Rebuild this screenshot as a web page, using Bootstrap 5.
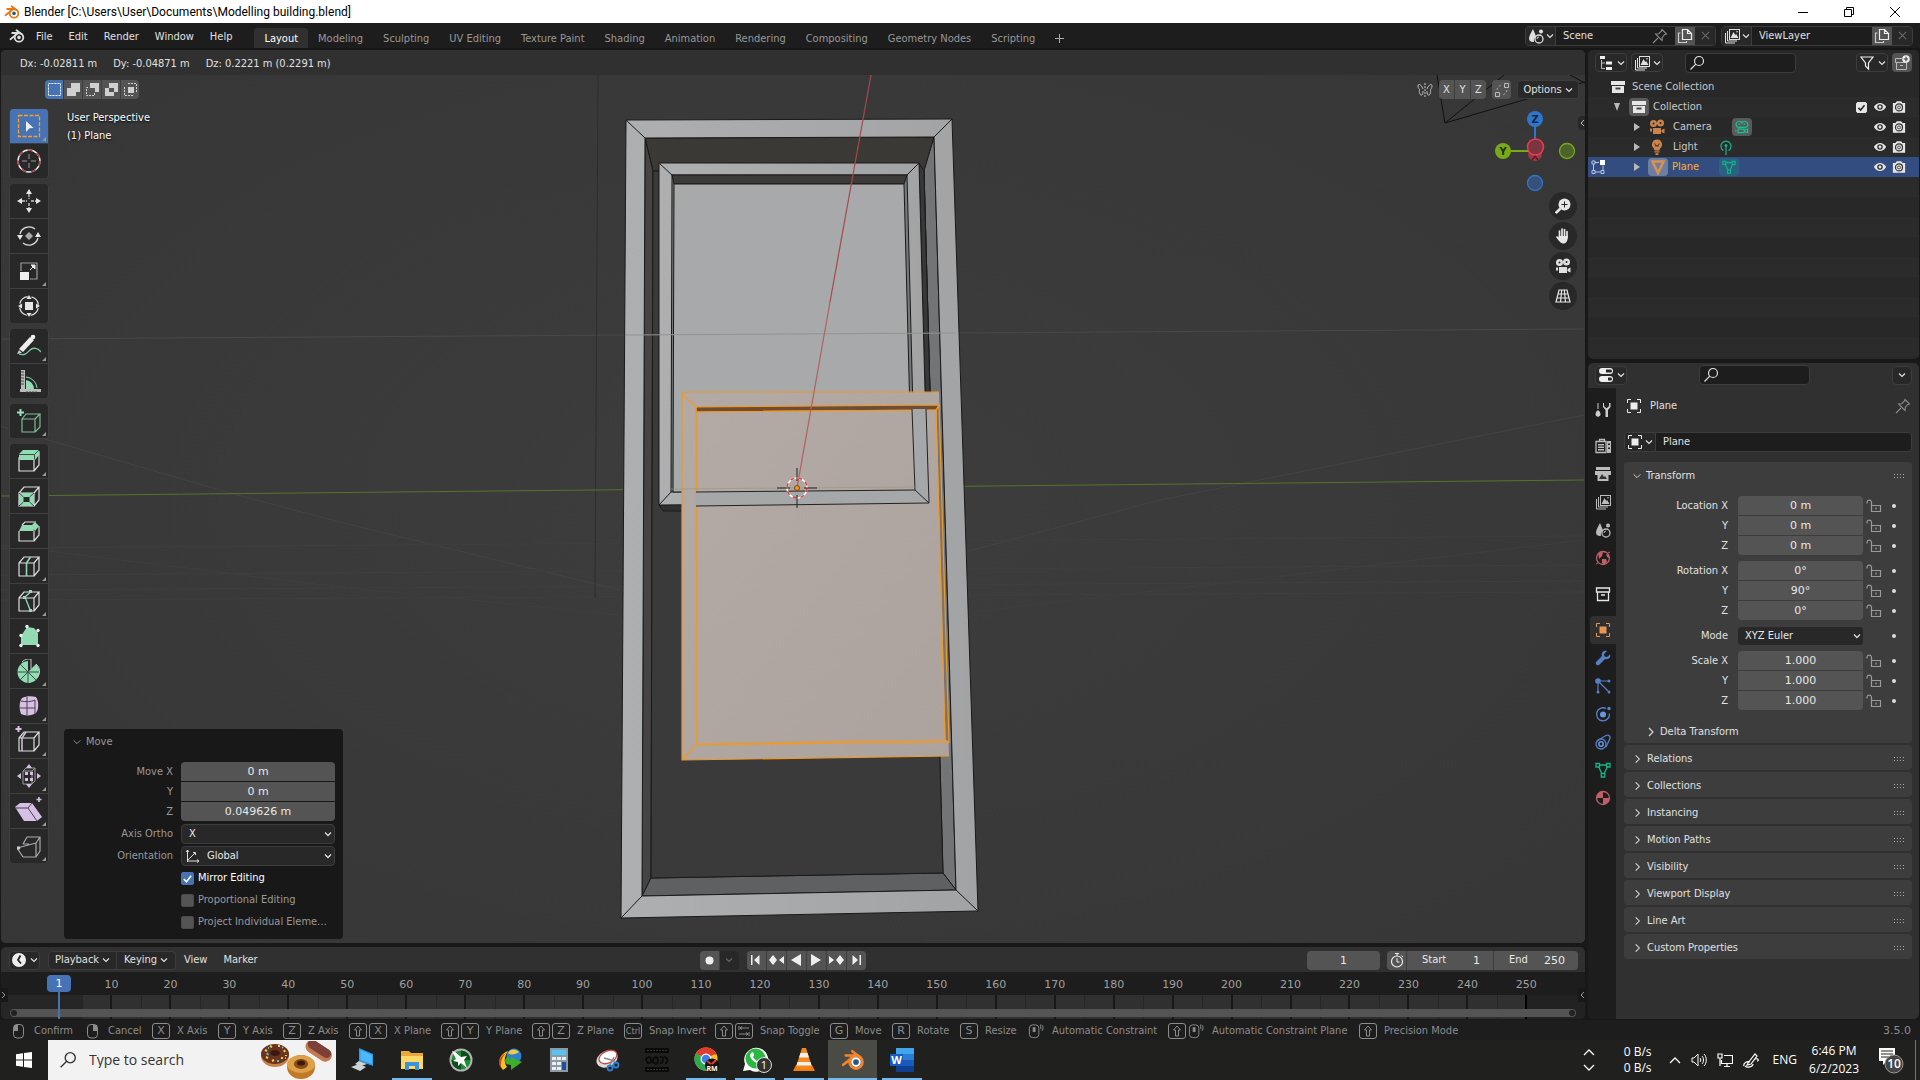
<!DOCTYPE html>
<html lang="en">
<head>
<meta charset="utf-8">
<meta name="viewport" content="width=device-width, initial-scale=1">
<title>Blender [C:\Users\User\Documents\Modelling building.blend]</title>
<link href="https://cdn.jsdelivr.net/npm/bootstrap@5.3.0/dist/css/bootstrap.min.css" rel="stylesheet">
<style>
:root{--ui:"DejaVu Sans Condensed","DejaVu Sans",sans-serif;--num:"DejaVu Sans",sans-serif;--win:"Open Sans","Noto Sans",sans-serif}
body{background:#181818;color:#e0e0e0;font:11px/18px var(--ui);height:100vh;min-height:1000px;overflow:hidden}
svg{display:block;flex:none}
a,a:hover{color:inherit;text-decoration:none}
button,input,select{font:inherit;color:inherit;border:0;padding:0;margin:0;border-radius:0;background:none}
button{display:flex;align-items:center;justify-content:center}
input{min-width:0}
.i16{width:16px;height:16px}.i14{width:14px;height:14px;margin:0 1px}.i24{width:24px;height:24px}
.chev{width:8px;height:8px}
.num-face{font-family:var(--num)}
.c-light{color:#eee}.c-grey{color:#bbb}.c-orange{color:#eb9550}.c-tan{color:#c9834b}
.titlebar{height:23px;background:#fff;color:#000;font:12px/18px Roboto,"Open Sans",sans-serif;padding:0 2px 0 4px}
.logo-tb{color:#e8770c;--eye:#265787}
.logo-app{color:#f5842a;--eye:#fff}
.winbtn{width:46px;height:20px}
.topbar{height:27px;background:#1d1d1d;border-bottom:2px solid #161616;padding:0 7px 0 9px}
.topbar .menus{gap:16px;height:25px;padding:2px 0 0 11px}
.wtabs{margin-left:22px}
.wtab{height:20px;line-height:21px;padding:0 10px;color:#989898;align-self:flex-end;border-radius:3px 3px 0 0}
.wtab.on{background:#303030;color:#fff}
.blocks{gap:5px}
.idblock{height:20px;border:1px solid #3d3d3d;border-radius:4px;background:#1d1d1d;overflow:hidden}
.idblock .pick{width:30px;background:#282828;border-right:1px solid #3d3d3d;gap:2px}
.idblock input{width:88px;padding-left:7px}
.idblock .wide{width:120px}
.idblock .pinb{width:31px}
.idblock .cp{width:20px;background:#545454}
.idblock .rm{width:20px;background:#282828;color:#6a6a6a}
.area{background:#303030;border-radius:5px;overflow:hidden}
.main{padding:0 1px 1px 1px;gap:3px;min-height:0}
.leftcol{gap:4px;min-width:0}
.rightcol{width:331px;gap:4px}
.viewport{background:#393939;min-height:0}
.scene{position:absolute;inset:0;width:100%;height:100%}
.vhead{height:25px;background:#303030;padding-left:19px;line-height:27px;gap:16px}
.vtools{height:34px;padding:5px 6px 0 44px}
.vbody{min-height:0}
.mirror{gap:6px}
.btngrp{border-radius:4px;overflow:hidden;gap:1px;background:#3d3d3d;height:19px}
.btngrp button{width:19px;height:19px;background:#545454}
.btngrp button.on{background:#4772b3}
.selmode button{width:18px}
.xyz button{width:15px}
.btngrp .w20{width:20px}
.btngrp .off{background:#282828;color:#666}
.darkbtn{background:#282828;border:1px solid #3d3d3d;border-radius:4px;height:19px;gap:3px}
.w62{width:62px}.w32{width:32px}.w31{width:31px}.w20{width:20px}.w69{width:69px}.w59{width:59px}
.toolbar{gap:6px;padding-left:8px}
.tgroup{border:1px solid #3f3f3f;border-width:0 1px;border-radius:4px;overflow:hidden;gap:1px;background:#3f3f3f;width:40px}
.tgroup button{width:100%;height:34px;background:#282828;position:relative}
.tgroup button.on{background:#4772b3}
.tgroup .more::after{content:"";position:absolute;right:2px;bottom:2px;border:2px solid transparent;border-right-color:#999;border-bottom-color:#999}
.midcol{margin-left:15px}
.hud{padding:0 0 0 3px;color:#fff;line-height:18px;text-shadow:0 1px 2px #000}
.oppanel{width:279px;background:#181818;border-radius:4px;padding:4px 8px 7px 8px;color:#999}
.oppanel .optitle{margin-bottom:11px}
.nrow{display:flex;align-items:center;height:19px;margin-bottom:1px}
.nrow>label{text-align:right;flex:none}
.oppanel .nrow>label{width:101px;margin-right:8px}
.oppanel .srow{height:22px;margin:0;padding-top:2px}
.oriicon{position:absolute;left:113px}
.numf{font-family:var(--num);background:#545454;color:#e8e8e8;text-align:center;height:19px;flex:1}
.tp{border-radius:4px 4px 0 0}.bt{border-radius:0 0 4px 4px}
.sel{appearance:none;height:20px;flex:1;min-width:0;background:#282828 url("data:image/svg+xml,%3Csvg xmlns='http://www.w3.org/2000/svg' viewBox='0 0 8 8'%3E%3Cpath d='M1 2.5 4 5.5 7 2.5' fill='none' stroke='%23ddd' stroke-width='1.3'/%3E%3C/svg%3E") no-repeat right 2px center/8px 8px;border:1px solid #3d3d3d;border-radius:4px;color:#e8e8e8;padding-left:7px}
.sel.with-ico{padding-left:25px}
.ck{appearance:none;width:13px;height:13px;background:#545454;border:1px solid #4a4a4a;border-radius:2px;margin-right:4px}
.ck:checked{background:#4772b3 url("data:image/svg+xml,%3Csvg xmlns='http://www.w3.org/2000/svg' viewBox='0 0 12 12'%3E%3Cpath d='M2 6.5 4.8 9.5 10 3' fill='none' stroke='%23fff' stroke-width='1.7'/%3E%3C/svg%3E") center/11px no-repeat;border-color:#4772b3}
.ck.inv:checked{width:11px;height:11px;margin-right:5px;background:#e6e6e6 url("data:image/svg+xml,%3Csvg xmlns='http://www.w3.org/2000/svg' viewBox='0 0 12 12'%3E%3Cpath d='M2 6.5 4.8 9.5 10 3' fill='none' stroke='%23222' stroke-width='2'/%3E%3C/svg%3E") center/9px no-repeat;border-color:#e6e6e6}
.ckrow{height:22px;padding:2px 0 0 109px}
.navb{width:28px;height:28px;border-radius:50%;background:#282828;margin-bottom:2px}
.gizcol{width:110px}
.ntab{position:absolute;right:0;top:66px;width:7px;height:14px;background:#282828;border-radius:4px 0 0 4px}
.timeline{height:72px}
.thead{height:25px;padding:1px 7px 0 8px}
.tmenu{gap:16px;margin-left:8px}
.transport{margin-right:22px}
.frames{flex:1 1 0;min-width:0}
.frames .numf{flex:none}
.curframe{width:73px;border-radius:4px;margin-right:7px}
.frames label.numf{text-align:left;font-family:var(--ui);padding-left:15px}
.fstart-l{width:52px}.fstart{width:34px;margin-left:-1px;text-align:right;padding-right:13px}
.fend-l{width:42px}.fend{width:42px;margin-left:-1px;text-align:right;padding-right:13px}
.ruler{height:23px;background:#1d1d1d;padding:0 29px 0 81px;font-family:var(--num);color:#a0a0a0}
.ruler span{flex:1 1 0;text-align:center;line-height:25px}
.ticks{height:24px;padding:0 0 0 81px;background:#262626}
.ticks i{flex:1 1 0;background:linear-gradient(#181818,#181818) 50% 0/2px 100% no-repeat,linear-gradient(#262626,#262626) 0 0/1px 100% no-repeat,#303030}
.ticks i:last-of-type{background:linear-gradient(#000,#000) 50% 0/2px 100% no-repeat,linear-gradient(#262626,#262626) 0 0/1px 100% no-repeat,linear-gradient(90deg,#303030 50%,#222 50%)}
.ticks b{width:29px;background:#222}
.sbar{position:absolute;left:9px;right:9px;bottom:2px;height:8px;border-radius:4px;background:#545454}
.sbar::before,.sbar::after{content:"";position:absolute;top:1px;width:6px;height:6px;border-radius:3px;background:#222}
.sbar::before{left:1px}.sbar::after{right:1px}
.playhead{position:absolute;left:46px;top:28px;width:24px;height:17px;border-radius:4px;background:#4772b3;color:#fff;text-align:center;font:11px/18px var(--num)}
.playhead::after{content:"";position:absolute;left:11px;top:17px;width:2px;height:27px;background:#4772b3}
.edge{position:absolute;top:41px;width:7px;height:14px;background:#181818}
.edge-l{left:0}.edge-r{right:0}
.statusbar{height:20px;background:#1d1d1d;color:#8c8c8c;padding:1px 9px 0 12px}
.hints{display:grid;grid-template-columns:74px 66px 66px 65px 66px 92px 91px 92px 91px 115px 62px 68px 68px 140px 191px 120px}
.hint{gap:7px;white-space:nowrap}
.keys{gap:2px}
kbd.keycap{display:block;width:18px;height:16px;border:1px solid #8c8c8c;border-radius:3px;background:none;padding:0;color:#8c8c8c;font:11px/14px var(--num);text-align:center}
kbd.tiny{font:9px/14px var(--ui)}
.outliner{height:309px;background:#282828}
.ohead{height:27px;padding:2px 7px 4px 7px;background:#282828}
.osearch{margin-left:22px}
.psearch{margin-left:72px}
.searchf{height:20px;width:111px;background:#1d1d1d;border:1px solid #3d3d3d;border-radius:4px;padding-left:3px}
.orow{height:20px;padding-right:12px;color:#c8c8c8}
.orow:nth-child(even){background:#2b2b2b}
.orow.sel-row{background:#334d80}
.lv0{padding-left:22px}.lv0 .i16{margin-right:6px}
.lv1{padding-left:25px}.lv2{padding-left:45px}.lv-edit{padding-left:2px}
.lv-edit .arrow{margin:0 7px 0 27px}
.data-ico{margin-left:20px}
.icobox{width:20px;height:18px;border-radius:4px;background:#5a5a5a;display:flex;align-items:center;justify-content:center}
.icobox.obj{background:#6d7fa0}.icobox.dat{background:#2a6080}
.c-active{color:#ffaf29}
.arrow{width:8px;height:8px;color:#b8b8b8}
.props{min-height:0}
.phead{height:25px;padding:0 7px 1px 7px}
.ptabs{width:28px;background:#1d1d1d;padding:8px 0 0 2px}
.ptabs button{width:26px;height:28px;border-radius:4px 0 0 4px}
.ptabs .gapb{margin-bottom:8px}
.ptabs .on{background:#303030}
.pbody{padding:8px 7px 0 8px;min-width:0}
.crumb{height:20px;margin-bottom:16px;padding:0 1px 0 2px}
.pname{margin-bottom:10px}
.pname .pick{width:31px}
.pcard{background:#3d3d3d;border-radius:4px;margin-bottom:2px}
.pcard.open{height:281px}
.pcard>.ph{height:25px;padding:2px 7px 0 8px;width:100%}
.pcard .nrow>label{width:104px;margin-right:10px}
.pcard .sel{height:18px;border:0;border-radius:3px}
.pfields{padding-top:9px}
.grp{margin-top:6px}
.lock{width:16px;height:16px;margin:0 10px 0 3px}
.dot{width:4px;height:4px;border-radius:50%;background:#ddd;margin-right:16px;flex:none}
.sel+.dot{margin-left:29px}
.delta{margin:13px 0 0 21px;gap:3px}
.taskbar{height:40px;background:#20201e;color:#fff;font:12px/16px var(--win)}
.startb{width:48px}
.tsearch{width:288px;background:#f2f2f2;padding-left:11px;color:#333}
.tsearch input{width:181px;padding-left:12px;font-size:14px;color:#333}
.tsearch input::placeholder{color:#333;opacity:1}
.tapps{margin-left:2px}
.tapp{width:49px;height:40px;position:relative}
.tapp.run::after{content:"";position:absolute;left:5px;right:4px;bottom:0;height:2px;background:#76b9ed}
.tapp.cur{background:#4b4b46}.tapp.cur::after{left:0;right:0}
.tray{white-space:nowrap;gap:10px}
.netrate{margin:0 7px 0 19px}
.clock{line-height:18px;padding:0 6px 0 2px}
.deskline{width:5px}
</style>
<script src="https://cdn.jsdelivr.net/npm/bootstrap@5.3.0/dist/js/bootstrap.bundle.min.js"></script>
</head>
<body class="d-flex flex-column">
<svg width="0" height="0" class="position-absolute" aria-hidden="true">
<defs>
<symbol id="chev" viewBox="0 0 8 8"><path d="M1 2.500 4 5.500 7 2.500" fill="none" stroke="currentColor" stroke-width="1.200"/></symbol>
<symbol id="cright" viewBox="0 0 12 12"><path d="M4 2l4 4-4 4" fill="none" stroke="currentColor" stroke-width="1.100"/></symbol>
<symbol id="cdown" viewBox="0 0 12 12"><path d="M2 4l4 4 4-4" fill="none" stroke="currentColor" stroke-width="1.100"/></symbol>
<symbol id="blender" viewBox="0 0 16 16"><g fill="none" stroke="currentColor" stroke-width="1.800" stroke-linecap="round"><path d="M1.500 11.200 9.300 5H3.200M7.500 2.200l5.200 4"/><circle cx="10" cy="9.400" r="4.300"/></g><circle cx="10" cy="9.400" r="1.800" fill="var(--eye,currentColor)"/></symbol>
<symbol id="scene" viewBox="0 0 16 16"><path d="M5 1C3 5 1 8 1 10.500 1 13 3 14 5 14c1 0 1-.5 1-.5A5 5 0 0 1 8 8.500C7.500 6 6 4 5 1z" fill="currentColor"/><circle cx="13" cy="3.500" r="2" fill="currentColor"/><circle cx="11" cy="11" r="4" fill="none" stroke="currentColor" stroke-width="1.300"/><path d="M9 11a2 2 0 0 1 2-2" fill="none" stroke="currentColor"/></symbol>
<symbol id="layers" viewBox="0 0 16 16"><path d="M1.500 5v10H11M3.500 3v10H13" fill="none" stroke="currentColor"/><rect x="5.500" y="1.500" width="10" height="10" fill="none" stroke="currentColor"/><path d="M6.500 10 9.500 4l1.800 3 .9-1 2.300 4z" fill="currentColor"/><circle cx="13" cy="3.800" r=".8" fill="currentColor"/></symbol>
<symbol id="copy" viewBox="0 0 16 16"><path d="M5.500 1.500h5l4 4v6h-9zM10.500 1.500v4h4" fill="none" stroke="#eee" stroke-width="1.200"/><path d="M3.500 5H1.500v9.500h8V13" fill="none" stroke="#ccc" stroke-width="1.200"/></symbol>
<symbol id="xx" viewBox="0 0 12 12"><path d="M2 2l8 8M10 2l-8 8" stroke="currentColor" stroke-width="1.100"/></symbol>
<symbol id="pin" viewBox="0 0 16 16"><path d="M10 1.500 14.500 6l-1.700.5-2.500 2.700-.3 3.300L3.500 6l3.300-.3L9.500 3zM6 10l-5 5" fill="none" stroke="#8a8a8a" stroke-width="1.100"/></symbol>
<symbol id="search" viewBox="0 0 16 16"><circle cx="10" cy="6" r="4.500" fill="none" stroke="currentColor" stroke-width="1.200"/><path d="M6.800 9.200 1.500 14.500" stroke="currentColor" stroke-width="1.200"/></symbol>
<symbol id="tree" viewBox="0 0 16 16"><path d="M2 1h5v3H2zM8 6.500h6v3H8zM8 12h6v3H8z" fill="#eee"/><path d="M3.500 5v8.500H7M3.500 8H7" fill="none" stroke="#bbb"/></symbol>
<symbol id="filter" viewBox="0 0 16 16"><path d="M2 2h12L9.500 8v6L6.500 11V8z" fill="none" stroke="#eee" stroke-width="1.200"/></symbol>
<symbol id="newcol" viewBox="0 0 16 16"><path d="M8 3.500H1.500v4h11M2.500 7.500v7h10v-7M6 10.500h3" fill="none" stroke="#bbb"/><circle cx="12" cy="4" r="3.800" fill="#eee"/><path d="M12 1.800v4.400M9.800 4h4.400" stroke="#444" stroke-width="1.200"/></symbol>
<symbol id="box" viewBox="0 0 16 16"><path d="M1 2h14v4H1zM2 7h12v7H2z" fill="#e6e6e6"/><path d="M5.500 8.500h5v2h-5z" fill="#444"/></symbol>
<symbol id="boxo" viewBox="0 0 16 16"><path d="M1.500 2h13v4h-13zM2.500 6v8.500h11V6M6 9h4" fill="none" stroke="#e6e6e6" stroke-width="1.300"/></symbol>
<symbol id="cam" viewBox="0 0 16 16"><circle cx="4.500" cy="4.500" r="3.500" fill="currentColor"/><circle cx="11.500" cy="4" r="3.500" fill="currentColor"/><circle cx="4.500" cy="4.500" r="1" fill="#282828"/><circle cx="11.500" cy="4" r="1" fill="#282828"/><path d="M4 9h8v6H4zM12.500 11 15.500 9.500v5L12.500 13zM1 9.500h2v3H1z" fill="currentColor"/></symbol>
<symbol id="camo" viewBox="0 0 16 16"><g fill="none" stroke="#12c496" stroke-width="1.300"><path d="M5 8.500A3.500 3.500 0 1 1 8 3.700 3.500 3.500 0 1 1 11 8.500zM3.500 10.500h7v4h-7zM10.500 11.800l4-1.500v4l-4-1.300M1 11v2"/></g><circle cx="4.800" cy="5" r=".9" fill="#12c496"/><circle cx="11" cy="4.500" r=".9" fill="#12c496"/></symbol>
<symbol id="bulb" viewBox="0 0 16 16"><path d="M8 .5a5 5 0 0 1 3 9l-.5 2h-5l-.5-2a5 5 0 0 1 3-9zM5.500 12.300h5v1.300h-5zM6.500 14.300h3V16h-3z" fill="#c9834b"/><path d="M6 4.500l1 3 1-1.500L9 7.500l1-3" fill="none" stroke="#4b3526"/></symbol>
<symbol id="lighto" viewBox="0 0 16 16"><path d="M5.500 11.500a5 5 0 1 1 5 0M8 8v8" fill="none" stroke="#12b389" stroke-width="1.200"/><circle cx="8" cy="6.500" r="1.500" fill="#12b389"/></symbol>
<symbol id="tri" viewBox="0 0 16 16"><path d="M2.500 2.500h11L8 14z" fill="none" stroke="#dd9050" stroke-width="2.500"/></symbol>
<symbol id="mesh" viewBox="0 0 16 16"><g fill="none" stroke="#12b389" stroke-width="1.300"><path d="M4.500 3h7M3.500 4.500 7 12M12.500 4.500 9 12"/><path d="M1 1.500h3.500V5H1zM11.500 1.500H15V5h-3.500zM6.300 11.500h3.500V15H6.300z"/></g></symbol>
<symbol id="eye" viewBox="0 0 16 16"><path d="M1 8c3.500-6 10.500-6 14 0-3.500 6-10.500 6-14 0z" fill="#e6e6e6"/><circle cx="8" cy="8" r="3.200" fill="#333"/><circle cx="8" cy="8" r="1.600" fill="#e6e6e6"/></symbol>
<symbol id="photo" viewBox="0 0 16 16"><path d="M1 3.500h3L5.500 1.500h5L12 3.500h3v11H1z" fill="#e6e6e6"/><circle cx="8" cy="8.500" r="4" fill="#e6e6e6" stroke="#333" stroke-width="1.400"/><circle cx="8" cy="8.500" r="1.700" fill="none" stroke="#333"/></symbol>
<symbol id="editm" viewBox="0 0 16 16"><path d="M3.500 5v6M5 13h6M13 6.500V11M5 3.500h4" stroke="#b8c4da" fill="none"/><path d="M2 2h3v3H2zM2 11.500h3v3H2zM11 11.500h3v3h-3z" fill="none" stroke="#b8c4da"/><path d="M10 1h5v5h-5z" fill="#fff"/></symbol>
<symbol id="objsq" viewBox="0 0 16 16"><path d="M1.500 5V1.500H5M11 1.500h3.500V5M14.500 11v3.500H11M5 14.500H1.500V11" fill="none" stroke="currentColor"/><path d="M4.500 4.500h7v7h-7z" fill="currentColor"/></symbol>
<symbol id="grip" viewBox="0 0 12 6"><g fill="#aaa"><path d="M1 1h1v1H1zM4 1h1v1H4zM7 1h1v1H7zM10 1h1v1h-1zM1 4h1v1H1zM4 4h1v1H4zM7 4h1v1H7zM10 4h1v1h-1z"/></g></symbol>
<symbol id="lock" viewBox="0 0 16 16"><path d="M5.500 7.500V4a2.300 2.300 0 0 0-4.500 0v1.500M5.500 7.500h9v6h-9zM10 9.500v2" fill="none" stroke="#9a9a9a" stroke-width="1.200"/></symbol>
<symbol id="shift" viewBox="0 0 12 12"><path d="M6 1l3.500 4H7.500v6h-3V5h-2z" fill="none" stroke="#8c8c8c" stroke-width="1"/></symbol>
<symbol id="cube" viewBox="0 0 24 24"><path d="M2 9h15v13H2zM2 9l5-6h15l-5 6M22 3v13l-5 6" fill="none" stroke="#ddd" stroke-width="1.200"/></symbol>
<symbol id="wheel" viewBox="0 0 18 16"><rect x="1.500" y="1.500" width="10" height="13.500" rx="3.500" fill="none" stroke="#8c8c8c"/><rect x="5" y="4" width="3" height="5" fill="#8c8c8c"/><path d="M13.500 1v5M15.500 2c.8 3 .3 5-1 6" fill="none" stroke="#8c8c8c"/></symbol>
</defs></svg>

<header class="titlebar d-flex align-items-center">
<svg class="i16 me-1 logo-tb"><use href="#blender"/></svg>
<span>Blender [C:\Users\User\Documents\Modelling building.blend]</span>
<div class="ms-auto d-flex">
<button class="winbtn" aria-label="Minimize"><svg width="10" height="10"><path d="M0 5.500h10" stroke="#000"/></svg></button>
<button class="winbtn" aria-label="Restore"><svg width="10" height="10"><path d="M.5 2.500h7v7h-7zM2.500 2.500v-2h7v7h-2" fill="none" stroke="#000"/></svg></button>
<button class="winbtn" aria-label="Close"><svg width="10" height="10"><path d="M0 0l10 10M10 0 0 10" stroke="#000"/></svg></button>
</div>
</header>

<nav class="topbar d-flex align-items-center">
<svg class="i16"><use href="#blender"/></svg>
<div class="menus d-flex align-items-center"><a href="#">File</a><a href="#">Edit</a><a href="#">Render</a><a href="#">Window</a><a href="#">Help</a></div>
<div class="wtabs d-flex align-self-stretch">
<a href="#" class="wtab on">Layout</a><a href="#" class="wtab">Modeling</a><a href="#" class="wtab">Sculpting</a><a href="#" class="wtab">UV Editing</a><a href="#" class="wtab">Texture Paint</a><a href="#" class="wtab">Shading</a><a href="#" class="wtab">Animation</a><a href="#" class="wtab">Rendering</a><a href="#" class="wtab">Compositing</a><a href="#" class="wtab">Geometry Nodes</a><a href="#" class="wtab">Scripting</a>
<button class="wtab" aria-label="Add workspace"><svg width="9" height="9"><path d="M4.500 0v9M0 4.500h9" stroke="#aaa"/></svg></button>
</div>
<div class="blocks ms-auto d-flex">
<div class="idblock d-flex"><button class="pick" aria-label="Browse scene"><svg class="i16"><use href="#scene"/></svg><svg class="chev"><use href="#chev"/></svg></button><input value="Scene" aria-label="Scene name"><button class="pinb" aria-label="Pin"><svg class="i16"><use href="#pin"/></svg></button><button class="cp" aria-label="New scene"><svg class="i16"><use href="#copy"/></svg></button><button class="rm" aria-label="Delete scene"><svg width="11" height="11"><use href="#xx"/></svg></button></div>
<div class="idblock d-flex"><button class="pick" aria-label="Browse layer"><svg class="i16"><use href="#layers"/></svg><svg class="chev"><use href="#chev"/></svg></button><input class="wide" value="ViewLayer" aria-label="Layer name"><button class="cp" aria-label="New layer"><svg class="i16"><use href="#copy"/></svg></button><button class="rm" aria-label="Delete layer"><svg width="11" height="11"><use href="#xx"/></svg></button></div>
</div>
</nav>

<main class="main d-flex flex-grow-1">
<div class="leftcol d-flex flex-column flex-grow-1">
<section class="viewport area flex-grow-1 position-relative d-flex flex-column">
<svg class="scene" viewBox="1 50 1584 893" preserveAspectRatio="xMidYMid slice" aria-label="3D scene">
<defs><linearGradient id="fr" x1="0" x2="1"><stop offset="0" stop-color="#adafb0"/><stop offset="1" stop-color="#a1a3a4"/></linearGradient>
<linearGradient id="sl" x1="0" x2="1" y2="1"><stop offset="0" stop-color="#b3a9a5"/><stop offset="1" stop-color="#aca29e"/></linearGradient>
<radialGradient id="vbg" r=".75"><stop offset="0" stop-color="#3d3d3d"/><stop offset="1" stop-color="#363636"/></radialGradient></defs>
<rect x="0" y="50" width="1600" height="900" fill="url(#vbg)"/>
<g stroke="#494949" fill="none"><path d="M0 339 1584 329"/><path d="M0 426 230 493 340 522 620 590M1584 415 1160 500 965 552" stroke="#434343"/><path d="M0 548 1584 536M0 575 1584 565M0 590 1584 581M0 600 1584 592M0 545 340 587 620 615M1584 540 1250 580 970 612" stroke="#3f3f3f"/><path d="M598 75 595 598" stroke="#2e2e2e"/></g>
<path d="M0 496 1584 480" stroke="#55742c"/>
<path d="M1445 123 1437 75M1445 123 1504 75M1445 123 1585 82M1570 75 1585 83" stroke="#111" fill="none"/>
<g stroke="#1a1a1a" stroke-linejoin="round">
<path d="M645 138 934 137 924 171 653 171z" fill="#3a3935"/>
<path d="M645 138 653 171 651 878 642 896z" fill="#454344"/>
<path d="M934 137 924 171 943 873 956 890z" fill="#727475"/>
<path d="M642 896 651 878 943 873 956 890z" fill="#5f6062"/>
<path d="M653 171 924 171 943 873 651 878z" fill="#3a3a3a"/>
<path fill-rule="evenodd" d="M626 120 952 119 978 911 621 918zM645 138 642 896 956 890 934 137z" fill="url(#fr)"/>
<path d="M626 120 645 138M952 119 934 137M621 918 642 896M978 911 956 890" fill="none"/>
<path d="M919 163 924 171 930 392 925 392z" fill="#383838"/>
<path d="M659 505 663 511H690L690 500z" fill="#303030"/>
<path d="M659 163 919 163 928 503 659 505z" fill="url(#fr)"/>
<path d="M672 175 907 175 915 490 671 492z" fill="#777a7a"/>
<path d="M672 175H907L904 184H674z" fill="#3d3b38"/>
<path d="M674 184 904 184 912 490 673 492z" fill="#a7a9aa"/>
<path d="M659 163 672 175M919 163 907 175M659 505 671 492M928 503 915 490" fill="none"/>
</g>
<path d="M625 335 955 333" stroke="#929494"/>
<g stroke="#f09a28" stroke-width="1.200">
<path d="M682 394 939 392 949 756 682 760z" fill="url(#sl)" stroke="none"/>
<path d="M939 405 949 742 945 740 936 410z" fill="#74767a"/>
<path d="M696 407 939 405 936 410 696 412z" fill="#6d4d35"/>
<path d="M697 412 936 410 945 740 697 744z" fill="url(#sl)"/>
<path d="M939 392H682V760L949 756M682 394 696 407V745L949 742M682 760 696 745" fill="none"/>
</g>
<path d="M912 409H926L929 503 696 506V492L915 490z" fill="#a5a7a8"/>
<path d="M912 409 915 490 696 492M926 409 929 503 696 506M915 490 929 503" fill="none" stroke="#222"/>
<path d="M871 75 830 302" stroke="#a8484f" stroke-width="1.200"/><path d="M830 302 797 488" stroke="#b0605f" stroke-width="1.200"/>
<path d="M671 489 915 487" stroke="#8f9c7a" opacity=".6"/>
<circle cx="797" cy="488" r="10" fill="none" stroke="#fff" stroke-width="1.500"/><circle cx="797" cy="488" r="10" fill="none" stroke="#e33c3c" stroke-width="1.500" stroke-dasharray="4 4"/>
<path d="M797 468v13M797 495v13M777 488h13M804 488h13" stroke="#222"/><circle cx="797" cy="488" r="2.500" fill="#f5951e" stroke="#7a4a10"/>
</svg>
<div class="vhead position-relative d-flex"><span>Dx: -0.02811 m</span><span>Dy: -0.04871 m</span><span>Dz: 0.2221 m (0.2291 m)</span></div>
<div class="vtools position-relative d-flex align-items-start">
<div class="btngrp selmode d-flex">
<button class="on" aria-label="Set"><svg width="15" height="15"><path d="M1.500 1.500h12v12h-12z" fill="none" stroke="#fff" stroke-dasharray="2 1"/></svg></button>
<button aria-label="Extend"><svg width="15" height="15"><path d="M5 1h9v9h-4v4H1V6h4z" fill="#d0d0d0"/></svg></button>
<button aria-label="Subtract"><svg width="15" height="15"><path d="M5 1h9v9h-4V6H5z" fill="#d0d0d0"/><path d="M9.500 11v2.500h-8v-8H4" fill="none" stroke="#d0d0d0" stroke-dasharray="2 1"/></svg></button>
<button aria-label="Difference"><svg width="15" height="15"><path d="M5 1h9v9h-4v4H1V6h4zM5 6v4h5V6z" fill="#d0d0d0" fill-rule="evenodd"/></svg></button>
<button aria-label="Intersect"><svg width="15" height="15"><path d="M5 5h6v6H5z" fill="#d0d0d0"/><path d="M5 1.500h8.500V10M10 13.500H1.500V5" fill="none" stroke="#d0d0d0" stroke-dasharray="2 1"/></svg></button>
</div>
<div class="mirror ms-auto d-flex align-items-center">
<svg class="i16"><path d="M6 7C4 2 1 1 1 4c0 2 1 3 2 4-1 0-1 2 0 4s3 2 3-3M10 7c2-5 5-6 5-3 0 2-1 3-2 4 1 0 1 2 0 4s-3 2-3-3" fill="none" stroke="#bbb"/><path d="M8 1v14" stroke="#ccc" stroke-dasharray="2 1"/></svg>
<div class="btngrp xyz d-flex"><button>X</button><button>Y</button><button>Z</button></div>
<div class="btngrp"><button aria-label="Auto merge"><svg class="i16"><path d="M1.500 10.500h4v4h-4zM10.500 1.500h4v4h-4z" fill="none" stroke="#bbb"/><path d="M3 8a6 6 0 0 1 5-5M13 8a6 6 0 0 1-5 5" fill="none" stroke="#aaa" stroke-dasharray="2 2"/></svg></button></div>
<button class="darkbtn px-1 w62">Options <svg class="chev"><use href="#chev"/></svg></button>
</div>
</div>
<div class="vbody d-flex flex-grow-1 position-relative">
<div class="toolbar d-flex flex-column">
<div class="tgroup d-flex flex-column">
<button class="on more" aria-label="Select box"><svg class="i24"><path d="M1.500 1.500h21v21h-21z" fill="none" stroke="#f5a02a" stroke-width="1.300" stroke-dasharray="4 1.500"/><path d="M9 7l7.500 7-4 .3L9 18z" fill="#eee"/></svg></button>
<button aria-label="Cursor"><svg class="i24"><circle cx="12" cy="12" r="11" fill="none" stroke="#eee" stroke-width="1.400"/><circle cx="12" cy="12" r="11" fill="none" stroke="#a8434a" stroke-width="1.600" stroke-dasharray="5 5"/><path d="M12 5v5M12 14v5M5 12h5M14 12h5" stroke="#999"/></svg></button>
</div>
<div class="tgroup d-flex flex-column">
<button aria-label="Move"><svg class="i24"><path d="M12 0l3 5H9zM12 24l3-5H9zM0 12l5-3v6zM24 12l-5-3v6z" fill="#e6e6e6"/><path d="M12 5v5M12 14v5M5 12h5M14 12h5" stroke="#ccc" stroke-width="1.300" stroke-dasharray="3 1"/></svg></button>
<button aria-label="Rotate"><svg class="i24"><path d="M3 10a9.500 9.500 0 0 1 15-5M21 14a9.500 9.500 0 0 1-15 5" fill="none" stroke="#ddd" stroke-width="1.300"/><path d="M0 11h6l-3 5zM18 13h6l-3-5z" fill="#e6e6e6"/><path d="M12 8l4 4-4 4-4-4z" fill="#aaa"/></svg></button>
<button class="more" aria-label="Scale"><svg class="i24"><path d="M4 12V4h16v16h-7" fill="none" stroke="#999" stroke-width="1.200"/><path d="M3 13h9v8H3z" fill="#eee"/><path d="M13 11l4-4M14 6h4v4z" stroke="#eee" fill="#eee"/></svg></button>
<button aria-label="Transform"><svg class="i24"><circle cx="12" cy="12" r="9.500" fill="none" stroke="#ddd" stroke-width="1.200" stroke-dasharray="11 4" stroke-dashoffset="-2"/><path d="M8 8h8v8H8zM12 1l2.500 4h-5zM12 23l2.500-4h-5zM1 12l4-2.500v5zM23 12l-4-2.500v5z" fill="#e6e6e6"/></svg></button>
</div>
<div class="tgroup d-flex flex-column">
<button class="more" aria-label="Annotate"><svg class="i24"><path d="M2 15 13 3l4 3L6 18z" fill="#eee"/><circle cx="16" cy="3" r="2.300" fill="#eee"/><path d="M2 16l3 3-5 1z" fill="#ccc"/><path d="M2 20c6 2 8-1 11-4s8-2 11 2" fill="none" stroke="#7ed0a2" stroke-width="1.300"/></svg></button>
<button aria-label="Measure"><svg class="i24"><path d="M4 1h4v19H4zM3 20h21v3H3z" fill="#bbb"/><path d="M4 3h3M4 6h3M4 9h3M4 12h3M4 15h3M10 22v2M13 22v2M16 22v2M19 22v2" stroke="#444"/><path d="M9 11a9 9 0 0 1 8 9H9z" fill="#93dbb2"/><path d="M9 8a12 12 0 0 1 11 11" fill="none" stroke="#93dbb2"/></svg></button>
</div>
<div class="tgroup d-flex flex-column">
<button class="more" aria-label="Add cube"><svg class="i24"><path d="M5 10h13v13H5zM5 10l4-5h14l-5 5M23 5v13l-5 5" fill="none" stroke="#7fbd98" stroke-width="1.200"/><path d="M3.500 0v7M0 3.500h7" stroke="#9be3ba" stroke-width="2"/></svg></button>
</div>
<div class="tgroup d-flex flex-column">
<button class="more" aria-label="Extrude"><svg class="i24"><use href="#cube"/><path d="M2 5l4-4h16v5l-4 5H2z" fill="#93dbb2"/><path d="M2 5.500h15.500v5M17.500 5.500 22 1" fill="none" stroke="#355243"/></svg></button>
<button aria-label="Inset"><svg class="i24"><use href="#cube"/><path fill-rule="evenodd" d="M2 9h15v13H2zM6.500 13v5h6v-5z" fill="#93dbb2"/><path d="M2 9l4.500 4M17 9l-4.500 4M2 22l4.500-4M17 22l-4.500-4" stroke="#355243"/></svg></button>
<button aria-label="Bevel"><svg class="i24"><path d="M2 12v10h15V12M17 22l5-6V7M5 6l3-3h11" fill="none" stroke="#ddd" stroke-width="1.200"/><path d="M2 12l3-6h10l2 6zM14 7l4-4 4 4-4 5z" fill="#93dbb2"/></svg></button>
<button class="more" aria-label="Loop cut"><svg class="i24"><use href="#cube"/><path d="M9.500 22V9l4-6" fill="none" stroke="#93dbb2" stroke-width="1.600"/></svg></button>
<button class="more" aria-label="Knife"><svg class="i24"><use href="#cube"/><path d="M13.500 3 8 8l5.500 14" fill="none" stroke="#93dbb2" stroke-width="1.300"/><path d="M12 1h3v3h-3zM6 7h3v3H6zM12 20h3v3h-3z" fill="#93dbb2"/></svg></button>
<button aria-label="Poly build"><svg class="i24"><path d="M4 21V12l6-9 7 1 4 5v12z" fill="#93dbb2"/><g fill="#eee"><circle cx="10" cy="2.500" r="1.700"/><circle cx="21" cy="6.500" r="1.700"/><circle cx="4" cy="11.500" r="1.700"/><circle cx="4" cy="21.500" r="1.700"/><circle cx="21" cy="21.500" r="1.700"/></g></svg></button>
<button class="more" aria-label="Spin"><svg class="i24"><path d="M11 13V2A11 11 0 1 0 19 5z" fill="#93dbb2"/><path d="M5 3c3-3 6-3 9-3v10M19 5c4 3 5 9 1 14" fill="none" stroke="#ccc"/><path d="M11 13V24M11 13H0M11 13l8 8M11 13l-8 8M11 13 3 5M11 13h11" stroke="#355243"/></svg></button>
<button class="more" aria-label="Smooth"><svg class="i24"><path d="M5 4c4-2 10-2 14-1 3 4 3 12 0 16-4 3-11 3-15 1C2 15 2 8 5 4z" fill="#d6c1e4"/><path d="M4 7c5 1 10 1 14-1M10 3v18M2 14h16M18 6v14" fill="none" stroke="#4a3f52"/></svg></button>
<button class="more" aria-label="Edge slide"><svg class="i24" overflow="visible"><use href="#cube"/><path d="M5 22V9l4-6" fill="none" stroke="#d6c1e4" stroke-width="1.500"/><path d="M1.500-3v6M-1.500 0h6" stroke="#d6c1e4" stroke-width="2"/></svg></button>
<button class="more" aria-label="Shrink"><svg class="i24"><path d="M6 7l3-3h9v13l-3 3H6zM6 7h9v13M15 7l3-3" fill="none" stroke="#999"/><path d="M12 0l3 4H9zM12 24l3-4H9zM0 12l4-3v6zM24 12l-4-3v6zM8 8h3v3H8zM13 8h3v3h-3zM8 14h3v3H8zM13 14h3v3h-3z" fill="#d6c1e4"/></svg></button>
<button class="more" aria-label="Shear"><svg class="i24" overflow="visible"><path d="M-2 8l5-4h12l10 14-5 4H7z" fill="#d6c1e4"/><path d="M-2 9h13l9 13M11 9l4-5" fill="none" stroke="#4a3f52"/><path d="M22-2v5M19.500.5h5" stroke="#d6c1e4" stroke-width="1.600"/></svg></button>
<button class="more" aria-label="Rip"><svg class="i24"><path d="M6 10l4-7h13v14l-4 6H6M19 9l4-6M19 9v14M0 14 19 9M0 14l6 9M6 10h6" fill="none" stroke="#aaa" stroke-width="1.200"/><circle cx="1.500" cy="14" r="1.800" fill="#d6c1e4"/></svg></button>
</div>
</div>
<div class="midcol d-flex flex-column justify-content-between pb-1">
<div class="hud"><div>User Perspective</div><div>(1) Plane</div></div>
<div class="oppanel">
<div class="optitle d-flex align-items-center"><svg width="10" height="10" class="me-1"><use href="#cdown"/></svg>Move</div>
<div class="nrow"><label for="mx">Move X</label><input id="mx" class="numf tp" value="0 m"></div>
<div class="nrow"><label for="my">Y</label><input id="my" class="numf" value="0 m"></div>
<div class="nrow"><label for="mz">Z</label><input id="mz" class="numf bt" value="0.049626 m"></div>
<div class="nrow srow"><label for="ao">Axis Ortho</label><select id="ao" class="sel"><option>X</option></select></div>
<div class="nrow srow position-relative"><label for="ori">Orientation</label><svg class="i16 oriicon"><path d="M2.500 14V2M1 4l1.500-2L4 4M2.500 13H14M12 11.500l2 1.500-2 1.500M3 12 10 5M8 4.500h2.500V7" fill="none" stroke="#ddd"/></svg><select id="ori" class="sel with-ico"><option>Global</option></select></div>
<div class="ckrow d-flex align-items-center text-white"><input type="checkbox" class="ck" id="c1" checked><label for="c1">Mirror Editing</label></div>
<div class="ckrow d-flex align-items-center"><input type="checkbox" class="ck" id="c2"><label for="c2">Proportional Editing</label></div>
<div class="ckrow d-flex align-items-center"><input type="checkbox" class="ck" id="c3"><label for="c3">Project Individual Eleme…</label></div>
</div>
</div>
<div class="ms-auto gizcol d-flex flex-column align-items-end pe-2">
<svg width="102" height="83" viewBox="1475 109 102 83" aria-label="View axes">
<path d="M1535 120v24" stroke="#2f75c9" stroke-width="2"/><path d="M1503 151h26" stroke="#76aa18" stroke-width="2"/>
<circle cx="1535" cy="154" r="7" fill="#9a3a48"/><path d="M1532 160l3-4 3 4" stroke="#5c1a26" fill="none" stroke-width="1.500"/>
<circle cx="1535.500" cy="147" r="8" fill="#7c3540" stroke="#ee3a4d" stroke-width="1.500"/>
<circle cx="1535" cy="119" r="8" fill="#2f75c9"/><circle cx="1503" cy="151" r="8" fill="#76aa18"/>
<circle cx="1567" cy="151" r="7.500" fill="#4d632a" stroke="#76aa18" stroke-width="1.300"/><circle cx="1535" cy="183" r="7.500" fill="#37507a" stroke="#2f75c9" stroke-width="1.300"/>
<text x="1535" y="123" text-anchor="middle" font-size="11" font-weight="bold" fill="#15263d">Z</text><text x="1503" y="155" text-anchor="middle" font-size="11" font-weight="bold" fill="#213005">Y</text>
</svg>
<button class="navb" aria-label="Zoom"><svg class="i16"><circle cx="9.500" cy="6.500" r="6" fill="#e6e6e6"/><path d="M5.500 10.500.8 15" stroke="#e6e6e6" stroke-width="2.500"/><path d="M9.500 3.500v6M6.500 6.500h6" stroke="#222"/></svg></button>
<button class="navb" aria-label="Pan"><svg class="i16"><path d="M4.500 9V3M7 8V1M9.500 8V1.500M12 9V3.500" stroke="#e6e6e6" stroke-width="1.700" stroke-linecap="round"/><path d="M3.700 8h9.200c0 4-1 7-4 7.500-3 0-4-1.500-8-6.500 1.500-1.500 2.500 0 3 .8z" fill="#e6e6e6"/></svg></button>
<button class="navb" aria-label="Camera view"><svg class="i16"><use href="#cam"/></svg></button>
<button class="navb" aria-label="Perspective"><svg class="i16"><path d="M4 2h8l3 12H1zM3 6h10M2 10h12M6.700 2 5.500 14M9.300 2l1.200 12" fill="none" stroke="#e6e6e6" stroke-width="1.200"/></svg></button>
</div>
</div>
<button class="ntab" aria-label="Sidebar"><svg width="6" height="8"><path d="M5 1 2 4l3 3" fill="none" stroke="#bbb"/></svg></button>
</section>

<section class="timeline area position-relative">
<div class="thead d-flex align-items-center">
<div class="frames d-flex align-items-center">
<button class="darkbtn w31" aria-label="Editor type"><svg class="i16"><circle cx="8" cy="8" r="7" fill="#eee"/><path d="M9.500 3.500 7 8l3 3.500" fill="none" stroke="#222" stroke-width="1.800"/></svg><svg class="chev"><use href="#chev"/></svg></button>
<div class="d-flex ms-1"><button class="darkbtn rounded-end-0 ms-1 w69">Playback <svg class="chev"><use href="#chev"/></svg></button><button class="darkbtn rounded-start-0 border-start-0 w59">Keying <svg class="chev"><use href="#chev"/></svg></button></div>
<div class="tmenu d-flex"><a href="#">View</a><a href="#">Marker</a></div>
</div>
<div class="transport d-flex">
<div class="btngrp d-flex me-2"><button aria-label="Record"><svg width="9" height="9"><circle cx="4.500" cy="4.500" r="4" fill="#eee"/></svg></button><button class="off" aria-label="Keying options"><svg class="chev"><use href="#chev"/></svg></button></div>
<div class="btngrp d-flex">
<button aria-label="First"><svg width="12" height="12"><path d="M1 1h1.500v10H1zM9.500 1v10L4 6z" fill="#eee"/></svg></button>
<button aria-label="Previous key"><svg width="17" height="12"><path d="M5 1l4 5-4 5-4-5zM16 2v8l-5-4z" fill="#eee"/></svg></button>
<button aria-label="Play reverse"><svg width="12" height="12"><path d="M11 0v12L1 6z" fill="#eee"/></svg></button>
<button aria-label="Play"><svg width="12" height="12"><path d="M1 0v12l10-6z" fill="#eee"/></svg></button>
<button aria-label="Next key"><svg width="17" height="12"><path d="M12 1l4 5-4 5-4-5zM1 2v8l5-4z" fill="#eee"/></svg></button>
<button aria-label="Last"><svg width="12" height="12"><path d="M9.500 1H11v10H9.500zM2.500 1v10L8 6z" fill="#eee"/></svg></button>
</div></div>
<div class="frames d-flex justify-content-end align-items-center">
<input class="numf curframe" value="1" aria-label="Current frame">
<div class="btngrp d-flex"><button aria-label="Use preview range"><svg class="i16"><circle cx="8" cy="9.500" r="5.500" fill="none" stroke="#eee" stroke-width="1.200"/><path d="M8 6v4h2.500M6 1.500h4M8 1.500V4M12.500 3.500l1.500 1.500" fill="none" stroke="#eee"/></svg></button>
<label for="fs" class="numf fstart-l">Start</label><input id="fs" class="numf fstart" value="1">
<label for="fe" class="numf fend-l">End</label><input id="fe" class="numf fend" value="250"></div>
</div>
</div>
<div class="ruler d-flex" id="ruler"></div>
<div class="ticks d-flex" id="ticks"></div>
<div class="sbar"></div>
<div class="playhead">1</div>
<svg class="edge edge-l" viewBox="0 0 7 14"><path d="M1 4l3 3-3 3" fill="none" stroke="#999"/></svg>
<svg class="edge edge-r" viewBox="0 0 7 14"><path d="M6 4 3 7l3 3" fill="none" stroke="#999"/></svg>
</section>
</div>

<aside class="rightcol d-flex flex-column">
<section class="outliner area">
<div class="ohead d-flex align-items-center">
<button class="darkbtn w32" aria-label="Outliner"><svg class="i16"><use href="#tree"/></svg><svg class="chev"><use href="#chev"/></svg></button>
<button class="darkbtn ms-1 w32" aria-label="Display mode"><svg class="i16"><use href="#layers"/></svg><svg class="chev"><use href="#chev"/></svg></button>
<div class="searchf osearch d-flex align-items-center"><svg class="i16"><use href="#search"/></svg><input type="search" class="w-75" aria-label="Search outliner"></div>
<button class="darkbtn ms-auto me-1 w32" aria-label="Filter"><svg class="i16"><use href="#filter"/></svg><svg class="chev"><use href="#chev"/></svg></button>
<div class="btngrp"><button class="w20" aria-label="New collection"><svg class="i16"><use href="#newcol"/></svg></button></div>
</div>
<div>
<div class="orow lv0 d-flex align-items-center"><svg class="i16"><use href="#box"/></svg><span>Scene Collection</span></div>
<div class="orow lv1 d-flex align-items-center"><svg class="arrow me-2" viewBox="0 0 8 8"><path d="M1 0h6L4 8z" fill="currentColor"/></svg><span class="icobox me-1"><svg class="i16"><use href="#box"/></svg></span><span>Collection</span><input type="checkbox" class="ck inv ms-auto" checked aria-label="Include"><svg class="i14 me-1"><use href="#eye"/></svg><svg class="i14"><use href="#photo"/></svg></div>
<div class="orow lv2 d-flex align-items-center"><svg class="arrow" viewBox="0 0 8 8"><path d="M1 0v8l6-4z" fill="currentColor"/></svg><svg class="i16 ms-2 me-2 c-tan"><use href="#cam"/></svg><span>Camera</span><span class="icobox data-ico"><svg class="i14"><use href="#camo"/></svg></span><svg class="i14 ms-auto me-1"><use href="#eye"/></svg><svg class="i14"><use href="#photo"/></svg></div>
<div class="orow lv2 d-flex align-items-center"><svg class="arrow" viewBox="0 0 8 8"><path d="M1 0v8l6-4z" fill="currentColor"/></svg><svg class="i16 ms-2 me-2"><use href="#bulb"/></svg><span>Light</span><svg class="i16 data-ico"><use href="#lighto"/></svg><svg class="i14 ms-auto me-1"><use href="#eye"/></svg><svg class="i14"><use href="#photo"/></svg></div>
<div class="orow lv-edit sel-row d-flex align-items-center"><svg class="i16"><use href="#editm"/></svg><svg class="arrow" viewBox="0 0 8 8"><path d="M1 0v8l6-4z" fill="currentColor"/></svg><span class="icobox obj me-1"><svg class="i16"><use href="#tri"/></svg></span><span class="c-active">Plane</span><span class="icobox dat data-ico"><svg class="i14"><use href="#mesh"/></svg></span><svg class="i14 ms-auto me-1"><use href="#eye"/></svg><svg class="i14"><use href="#photo"/></svg></div>
<div class="orow"></div><div class="orow"></div><div class="orow"></div><div class="orow"></div><div class="orow"></div><div class="orow"></div><div class="orow"></div><div class="orow"></div><div class="orow"></div>
</div>
</section>

<section class="props area flex-grow-1 d-flex flex-column">
<div class="phead d-flex align-items-center">
<button class="darkbtn w32" aria-label="Properties editor"><svg class="i16"><rect x="1" y="1" width="14" height="6" rx="3" fill="#eee"/><rect x="1" y="9" width="14" height="6" rx="3" fill="#eee"/><path d="M8 2.500h4.500a1.500 1.500 0 0 1 0 3H8zM10 10.500h2.500a1.500 1.500 0 0 1 0 3H10z" fill="#282828"/></svg><svg class="chev"><use href="#chev"/></svg></button>
<div class="searchf psearch d-flex align-items-center"><svg class="i16"><use href="#search"/></svg><input type="search" class="w-75" aria-label="Search properties"></div>
<button class="darkbtn ms-auto w20" aria-label="Options"><svg class="chev"><use href="#chev"/></svg></button>
</div>
<div class="d-flex flex-grow-1">
<div class="ptabs">
<button class="gapb" aria-label="Tool"><svg class="i16"><path d="M3 1v6M2 9h2v5H2z" stroke="#ccc" fill="#ccc"/><circle cx="3" cy="12" r="2.500" fill="#ccc"/><path d="M9 1v3l2 2h1l2-2V1h1.500v4L13 8v7h-2.500V8L8 5V1z" fill="#ccc"/></svg></button>
<button aria-label="Render"><svg class="i16"><path d="M4.500 3.500V1.500h5v2M1 3.500h10v11H1z" fill="none" stroke="#bbb" stroke-width="1.300"/><path d="M12 3h4v12h-4zM3 6h6v1.500H3zM3 8.500h6V10H3zM3 11h6v1.500H3z" fill="#bbb"/><path d="M13 5.500h2V7h-2zM13 9.500h2V11h-2z" fill="#222"/></svg></button>
<button aria-label="Output"><svg class="i16"><path d="M1 1h14v3H1zM0 5h16v4h-2.500v6h-11V9H0z" fill="#bbb"/><path d="M4 13l3-5 2 3 1-1 2 3z" fill="#333"/></svg></button>
<button aria-label="View layer"><svg class="i16 c-grey"><use href="#layers"/></svg></button>
<button aria-label="Scene"><svg class="i16 c-grey"><use href="#scene"/></svg></button>
<button class="gapb" aria-label="World"><svg class="i16"><circle cx="8" cy="8" r="6.500" fill="none" stroke="#bf5f66" stroke-width="1.300"/><path d="M3 3l5-1-1 4-3 3zM7 9l4 0 1 3-3 3-2-2zM11 4l3 1v3l-2-1z" fill="#bf5f66"/><path d="M1 14l2-1M15 2l-2 1" stroke="#bf5f66"/></svg></button>
<button class="gapb" aria-label="Collection"><svg class="i16"><use href="#boxo"/></svg></button>
<button class="on" aria-label="Object"><svg class="i16 c-orange"><use href="#objsq"/></svg></button>
<button aria-label="Modifiers"><svg class="i16"><path d="M15 4.500 12 7l-2.500-.5L9 4l3-3C8 0 6 3 7 6l-6 6c-1 2 1 4 3 3l6-6c4 1 6-2 5-4.500z" fill="#5680c8"/></svg></button>
<button aria-label="Particles"><svg class="i16"><circle cx="3" cy="3" r="2.800" fill="#5680c8"/><path d="M5 3h8M3 5v8M5 5l8 8" stroke="#5680c8" stroke-width="1.200"/><circle cx="14" cy="3" r="1.500" fill="#5680c8"/><circle cx="3" cy="14" r="1.500" fill="#5680c8"/><circle cx="14" cy="14" r="1.500" fill="#5680c8"/></svg></button>
<button aria-label="Physics"><svg class="i16"><path d="M11 2.500a6.500 6.500 0 1 0 3.500 5" fill="none" stroke="#5680c8" stroke-width="1.300"/><circle cx="8" cy="8.500" r="3" fill="#6a96e0"/><circle cx="14" cy="2.500" r="1.700" fill="#5680c8"/></svg></button>
<button aria-label="Constraints"><svg class="i16"><path d="M2 7 11 1.500c3-1 5 1 3.500 4L11 13" fill="none" stroke="#5680c8" stroke-width="1.300"/><circle cx="6" cy="10" r="5" fill="none" stroke="#5680c8" stroke-width="1.300"/><circle cx="6" cy="10" r="2.200" fill="none" stroke="#6a96e0" stroke-width="1.500"/></svg></button>
<button aria-label="Data"><svg class="i16"><use href="#mesh"/></svg></button>
<button aria-label="Material"><svg class="i16"><circle cx="8" cy="8" r="6.500" fill="#1d1d1d" stroke="#bf5f66" stroke-width="1.300"/><path d="M8 8V1.500A6.500 6.500 0 0 0 1.500 8zM8 8v6.500A6.500 6.500 0 0 0 14.500 8z" fill="#bf5f66"/></svg></button>
</div>
<div class="pbody flex-grow-1">
<div class="crumb d-flex align-items-center"><svg class="i16 me-2 c-light"><use href="#objsq"/></svg>Plane<svg class="i16 ms-auto"><use href="#pin"/></svg></div>
<div class="idblock pname d-flex"><button class="pick" aria-label="Browse object"><svg class="i16 c-light"><use href="#objsq"/></svg><svg class="chev"><use href="#chev"/></svg></button><input value="Plane" class="flex-grow-1" aria-label="Object name"></div>
<div class="pcard open">
<button class="ph justify-content-start"><svg width="10" height="10" class="me-1"><use href="#cdown"/></svg>Transform<svg width="12" height="6" class="ms-auto"><use href="#grip"/></svg></button>
<div class="pfields">
<div class="nrow"><label for="lx">Location X</label><input id="lx" class="numf tp" value="0 m"><svg class="lock"><use href="#lock"/></svg><i class="dot"></i></div>
<div class="nrow"><label for="ly">Y</label><input id="ly" class="numf" value="0 m"><svg class="lock"><use href="#lock"/></svg><i class="dot"></i></div>
<div class="nrow"><label for="lz">Z</label><input id="lz" class="numf bt" value="0 m"><svg class="lock"><use href="#lock"/></svg><i class="dot"></i></div>
<div class="nrow grp"><label for="rx">Rotation X</label><input id="rx" class="numf tp" value="0°"><svg class="lock"><use href="#lock"/></svg><i class="dot"></i></div>
<div class="nrow"><label for="ry">Y</label><input id="ry" class="numf" value="90°"><svg class="lock"><use href="#lock"/></svg><i class="dot"></i></div>
<div class="nrow"><label for="rz">Z</label><input id="rz" class="numf bt" value="0°"><svg class="lock"><use href="#lock"/></svg><i class="dot"></i></div>
<div class="nrow grp"><label for="md">Mode</label><select id="md" class="sel"><option>XYZ Euler</option></select><i class="dot"></i></div>
<div class="nrow grp"><label for="sx">Scale X</label><input id="sx" class="numf tp" value="1.000"><svg class="lock"><use href="#lock"/></svg><i class="dot"></i></div>
<div class="nrow"><label for="sy">Y</label><input id="sy" class="numf" value="1.000"><svg class="lock"><use href="#lock"/></svg><i class="dot"></i></div>
<div class="nrow"><label for="sz">Z</label><input id="sz" class="numf bt" value="1.000"><svg class="lock"><use href="#lock"/></svg><i class="dot"></i></div>
</div>
<button class="delta"><svg width="12" height="12"><use href="#cright"/></svg>Delta Transform</button>
</div>
<div id="panels"></div>
</div>
</div>
</section>
</aside>
</main>

<footer class="statusbar d-flex align-items-center justify-content-between">
<div class="hints" id="hints"></div>
<span class="num-face">3.5.0</span>
</footer>

<footer class="taskbar d-flex">
<button class="startb" aria-label="Start"><svg class="i16"><path d="M0 2.200 7 1.200v6.300H0zM8 1l8-1v7.500H8zM0 8.500h7v6.300l-7-1zM8 8.500h8V16l-8-1z" fill="#fff"/></svg></button>
<div class="tsearch d-flex align-items-center">
<svg width="18" height="18" viewBox="0 0 16 16"><use href="#search"/></svg>
<input type="search" placeholder="Type to search" aria-label="Type to search">
<svg width="76" height="38" viewBox="0 0 76 38">
<ellipse cx="17" cy="15" rx="14" ry="11" fill="#c98242"/><ellipse cx="17" cy="13" rx="14" ry="10" fill="#6a3420"/><ellipse cx="17" cy="12" rx="5" ry="3" fill="#3a1a10"/><path d="M7 9l2 1M12 5l2 1M20 5l2 0M26 9l1 2M8 16l2 1M14 20l2-1M23 17l2 0M28 14l0 1" stroke="#f2d04a" stroke-width="2"/><path d="M9 12l1 2M24 6l1 1M19 20l2 0M10 7h1M27 17h1" stroke="#54c0d8" stroke-width="2"/>
<rect x="46" y="3" width="29" height="13" rx="6.500" transform="rotate(33 60 10)" fill="#c27b50"/><rect x="47" y="3" width="26" height="9" rx="4.500" transform="rotate(33 60 10)" fill="#7c4038"/>
<ellipse cx="43" cy="26" rx="14" ry="12" fill="#c07a26"/><ellipse cx="43" cy="23" rx="14" ry="9" fill="#dfa04a"/><ellipse cx="43" cy="23" rx="7" ry="5" fill="#8a4a16"/><ellipse cx="43" cy="22" rx="4" ry="2.500" fill="#3a1a08"/></svg>
</div>
<div class="tapps d-flex">
<button class="tapp" aria-label="This PC"><svg class="i24"><path d="M8 0 22 6v12L8 13z" fill="#2b9ae8"/><path d="M9.500 2 21 7v9L9.500 12z" fill="#4db8ff"/><path d="M8 13l8 3-6 2-6-2zM0 19l8-3 7 3-6 4z" fill="#ccd2d6"/></svg></button>
<button class="tapp run" aria-label="Explorer"><svg class="i24"><path d="M1 3h8l2 2h12v16H1z" fill="#e8a93a"/><path d="M1 8h22v13H1z" fill="#ffd867"/><path d="M5 14h14v8h-4v-4H9v4H5z" fill="#3a94da"/></svg></button>
<button class="tapp" aria-label="Flight tool"><svg class="i24"><circle cx="12" cy="12" r="11.500" fill="#b5b5b5"/><circle cx="12" cy="12" r="9.500" fill="#1f8f35"/><path d="M12 2.500a9.500 9.500 0 0 1 9.500 9.500H12zM12 12v9.500A9.500 9.500 0 0 1 2.500 12z" fill="#114d1b"/><path d="M3 3l3 1 6 5 6-1-3 4 3 8-6-5-3 3 0-4-5-1 3-2z" fill="#fff"/></svg></button>
<button class="tapp" aria-label="Download manager"><svg class="i24"><circle cx="16" cy="8" r="7.500" fill="#2d7fd0"/><path d="M10 5c3-5 8-4 11-1-3 2-7 4-11 1z" fill="#f0c948"/><path d="M10 3C2 6-2 14 5 22l4-3C5 13 7 8 10 3z" fill="#f4c51e"/><path d="M8 5C1 9-1 15 3 20c-1-6 1-11 5-15z" fill="#d43b2a"/><path d="M11 8c-6 3-5 9 2 9v5l11-8-11-5v3c-2 0-3-2-2-4z" fill="#3cae28"/></svg></button>
<button class="tapp" aria-label="Calculator"><svg class="i24"><path d="M3 0h18v24H3z" fill="#8c99a6"/><path d="M5 2h14v5H5z" fill="#54c4f2"/><path d="M5 9h4v3H5zM10 9h4v3h-4zM15 9h4v3h-4zM5 14h4v3H5zM10 14h4v3h-4zM5 19h4v3H5zM10 19h4v3h-4z" fill="#eee"/><path d="M15 14h4v8h-4z" fill="#1d4e96"/></svg></button>
<button class="tapp" aria-label="Snipping tool"><svg class="i24"><ellipse cx="11" cy="11" rx="11" ry="8" transform="rotate(-25 11 11)" fill="#ddd"/><ellipse cx="12" cy="9" rx="9.500" ry="6" transform="rotate(-25 12 9)" fill="#fff" stroke="#c44" stroke-width="1.300"/><path d="M8 10l11 3M18 9l-4 8" stroke="#888" stroke-width="1.300"/><circle cx="14" cy="20" r="2.500" fill="none" stroke="#2d7fd0" stroke-width="1.800"/><circle cx="20" cy="17" r="2.500" fill="none" stroke="#2d7fd0" stroke-width="1.800"/></svg></button>
<button class="tapp" aria-label="Font tool"><svg class="i24"><path d="M0 0h24v5H0zM0 19h24v5H0z" fill="#0b0b0a"/><path d="M2 2.500h20M2 21.500h20" stroke="#33332e" stroke-dasharray="2 1"/><path d="M1 13c0-5 5-5 5-1s-4 4-4 1M8 15c-1-6 5-8 5-3s-4 4-4 2M15 9c5-1 3 7 0 6M19 9c4 0 5 6 1 6" fill="none" stroke="#0b0b0a" stroke-width="2"/></svg></button>
<button class="tapp run" aria-label="Chrome"><svg class="i24" overflow="visible"><circle cx="12" cy="11" r="11.500" fill="#fbc116"/><path d="M12 11 2 5.200A11.500 11.500 0 0 1 22 5.200z" fill="#e33b2e"/><path d="M12 11 2 5.200A11.500 11.500 0 0 0 12 22.500z" fill="#2da94f"/><path d="M3 5.500h19" stroke="#e33b2e" stroke-width="2"/><circle cx="12" cy="11" r="5.500" fill="#fff"/><circle cx="12" cy="11" r="4.300" fill="#3d7fe8"/><circle cx="18" cy="17.500" r="7" fill="#111"/><path d="M13 13l4 3M22 12l-4 4" stroke="#e33b2e" stroke-width="2" fill="none"/><text x="18" y="23" font-size="7" font-weight="bold" text-anchor="middle" fill="#fff">RM</text></svg></button>
<button class="tapp run" aria-label="WhatsApp"><svg width="34" height="28" viewBox="-5 0 34 28"><path d="M0 25l2-7A12 12 0 1 1 7 24z" fill="#fff"/><circle cx="12.500" cy="12.500" r="10" fill="#2cb742"/><path d="M8 7c2-2 3 1 3 2l-1 2c1 2 3 3 4 4l2-2c2 0 4 2 2 3-4 4-14-5-10-9z" fill="#fff"/><circle cx="21" cy="19" r="7.500" fill="#333" stroke="#ddd"/><text x="21" y="23" font-size="11" fill="#fff" text-anchor="middle">1</text></svg></button>
<button class="tapp run" aria-label="VLC"><svg class="i24"><path d="M4 17h16l3 6H1z" fill="#f07e10"/><path d="M10 0h4l6 19c-4 3-12 3-16 0z" fill="#f58a1a"/><path d="M8.500 5h7l1.500 4.500H7zM5.500 14h13l1 3.500h-15z" fill="#f0f0f0"/></svg></button>
<button class="tapp run cur" aria-label="Blender"><svg class="i24 logo-app" viewBox="0 0 16 16"><use href="#blender"/><circle cx="10" cy="9.400" r="3.200" fill="#fff"/><circle cx="10" cy="9.400" r="1.900" fill="#265787"/></svg></button>
<button class="tapp run" aria-label="Word"><svg class="i24"><path d="M6 0h18v24H6z" fill="#2b7cd3"/><path d="M6 0h18v6H6z" fill="#41a5ee"/><path d="M6 12h18v6H6z" fill="#185abd"/><path d="M6 18h18v6H6z" fill="#103f91"/><path d="M0 6h13v12H0z" fill="#185abd"/><text x="6.500" y="16" font-size="11" font-weight="bold" text-anchor="middle" fill="#fff">W</text></svg></button>
</div>
<div class="tray ms-auto d-flex align-items-center">
<svg width="12" height="22"><path d="M1 6l5-5 5 5M1 16l5 5 5-5" fill="none" stroke="#fff" stroke-width="1.300"/></svg>
<div class="netrate">0 B/s<br>0 B/s</div>
<svg width="12" height="8"><path d="M1 7l5-5 5 5" fill="none" stroke="#fff" stroke-width="1.300"/></svg>
<svg class="i16"><path d="M1 6h2l4-4v12l-4-4H1zM9 6c1 1 1 3 0 4M11 4c2 2 2 6 0 8M13 2c3 3 3 9 0 12" fill="none" stroke="#fff"/></svg>
<svg class="i16"><path d="M1 2h4v4H1zM7 3.500h8.500v8H4.500V8M3 6v8M10 12v2M7 14.500h6" fill="none" stroke="#fff" stroke-width="1.200"/></svg>
<svg class="i16"><path d="M5 11 12 2l2 2-6 8-4 1zM1 14c-1-3 3-5 6-4M2 14c2 2 8 1 8-2M12 7c4-1 4 2 2 2" fill="none" stroke="#fff" stroke-width="1.200"/></svg>
<span class="ms-1">ENG</span>
<div class="clock text-center">6:46 PM<br>6/2/2023</div>
<svg width="30" height="30"><path d="M4 3h16v13h-8l-4 4v-4H4z" fill="#fff"/><path d="M6 6h12M6 9h12M6 12h8" stroke="#222"/><circle cx="19" cy="19" r="9" fill="#444" stroke="#999"/><text x="19" y="23" font-size="12" font-weight="600" fill="#fff" text-anchor="middle">10</text></svg>
<div class="deskline border-start border-secondary align-self-stretch"></div>
</div>
</footer>

<script>
const el=(id)=>document.getElementById(id);
for(let f=10;f<=250;f+=10){el('ruler').insertAdjacentHTML('beforeend','<span>'+f+'</span>');el('ticks').insertAdjacentHTML('beforeend','<i></i>');}
el('ticks').insertAdjacentHTML('beforeend','<b></b>');
for(const n of ['Relations','Collections','Instancing','Motion Paths','Visibility','Viewport Display','Line Art','Custom Properties'])
 el('panels').insertAdjacentHTML('beforeend','<div class="pcard"><button class="ph justify-content-start"><svg width="11" height="12" class="me-1"><use href="#cright"/></svg><span>'+n+'</span><svg width="12" height="6" class="ms-auto"><use href="#grip"/></svg></button></div>');
const mouse=(r)=>'<svg width="15" height="16"><rect x="1.500" y="1.500" width="10" height="13.500" rx="3.500" fill="none" stroke="#8c8c8c"/><path d="'+(r?'M7 2h4v6H7z':'M2 2h4v6H2z')+'" fill="#8c8c8c"/></svg>';
const wheel='<svg width="17" height="16"><use href="#wheel"/></svg>';
const key=k=>'<kbd class="keycap'+(k.length>1?' tiny':'')+'">'+k+'</kbd>';
const shift='<kbd class="keycap"><svg width="16" height="14" viewBox="-2 -1 16 14"><use href="#shift" width="12" height="12"/></svg></kbd>';
const tab='<kbd class="keycap"><svg width="16" height="14"><path d="M3 2v4M4 4h9M6 2.500 4 4l2 1.500M13 8v4M12 10H3M10 8.500l2 1.500-2 1.500" fill="none" stroke="#8c8c8c"/></svg></kbd>';
const hints=[[mouse(0),'Confirm'],[mouse(1),'Cancel'],[key('X'),'X Axis'],[key('Y'),'Y Axis'],[key('Z'),'Z Axis'],[shift+key('X'),'X Plane'],[shift+key('Y'),'Y Plane'],[shift+key('Z'),'Z Plane'],[key('Ctrl'),'Snap Invert'],[shift+tab,'Snap Toggle'],[key('G'),'Move'],[key('R'),'Rotate'],[key('S'),'Resize'],[wheel,'Automatic Constraint'],[shift+wheel,'Automatic Constraint Plane'],[shift,'Precision Mode']];
for(const [k,t] of hints) el('hints').insertAdjacentHTML('beforeend','<div class="hint d-flex align-items-center"><span class="keys d-flex">'+k+'</span><span>'+t+'</span></div>');
</script>
</body>
</html>
